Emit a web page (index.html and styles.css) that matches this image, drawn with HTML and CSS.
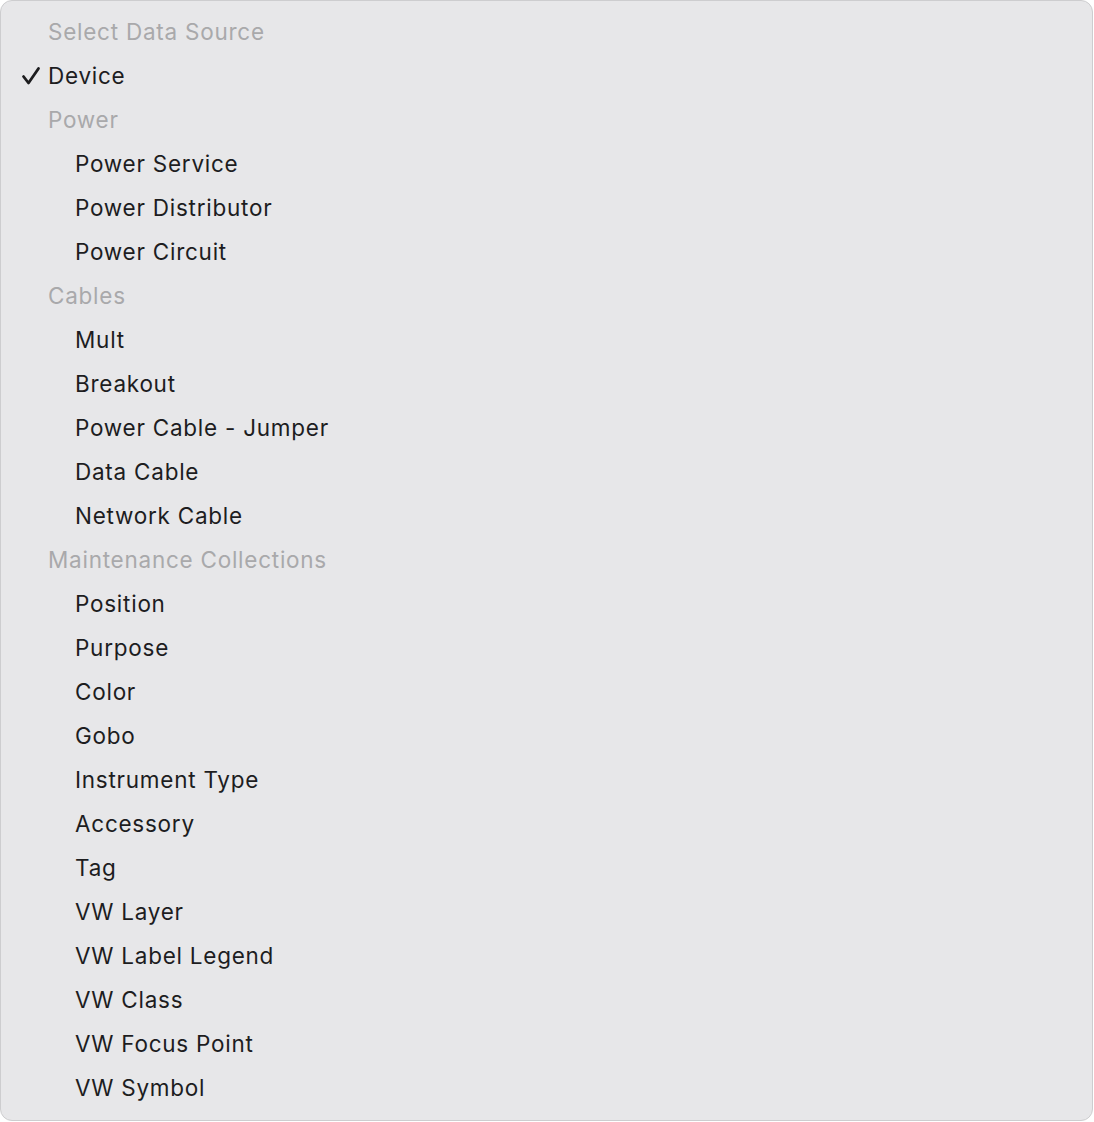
FILE: index.html
```html
<!DOCTYPE html>
<html>
<head>
<meta charset="utf-8">
<link rel="stylesheet" href="styles.css">
</head>
<body>
<div class="menu">
  <div class="row header">Select Data Source</div>
  <div class="row top"><svg class="check" width="20" height="20" viewBox="0 0 20 20"><path d="M2.5 10.5 L7.5 17 L17.5 2.5" fill="none" stroke="#1d1d1f" stroke-width="2.8" stroke-linecap="round" stroke-linejoin="round"/></svg>Device</div>
  <div class="row header">Power</div>
  <div class="row item">Power Service</div>
  <div class="row item">Power Distributor</div>
  <div class="row item">Power Circuit</div>
  <div class="row header">Cables</div>
  <div class="row item">Mult</div>
  <div class="row item">Breakout</div>
  <div class="row item">Power Cable - Jumper</div>
  <div class="row item">Data Cable</div>
  <div class="row item">Network Cable</div>
  <div class="row header">Maintenance Collections</div>
  <div class="row item">Position</div>
  <div class="row item">Purpose</div>
  <div class="row item">Color</div>
  <div class="row item">Gobo</div>
  <div class="row item">Instrument Type</div>
  <div class="row item">Accessory</div>
  <div class="row item">Tag</div>
  <div class="row item">VW Layer</div>
  <div class="row item">VW Label Legend</div>
  <div class="row item">VW Class</div>
  <div class="row item">VW Focus Point</div>
  <div class="row item">VW Symbol</div>
</div>
</body>
</html>
```
FILE: styles.css
```css
html, body {
  margin: 0;
  padding: 0;
  background: #ffffff;
}
body {
  width: 1094px;
  height: 1122px;
  overflow: hidden;
}
.menu {
  box-sizing: border-box;
  width: 1093px;
  height: 1121px;
  background: #e7e7e9;
  border: 1px solid #cdcdcf;
  border-radius: 12px;
  padding: 8px 0 0 0;
  font-family: Inter, "Noto Sans", sans-serif;
  font-size: 22.5px;
  letter-spacing: 0.75px;
}
.row {
  height: 44px;
  display: flex;
  align-items: center;
  white-space: nowrap;
}
.header {
  padding-left: 47px;
  color: #a9a9ab;
}
.top {
  padding-left: 47px;
  color: #1d1d1f;
  position: relative;
}
.check {
  position: absolute;
  left: 20px;
  top: 13px;
}
.item {
  padding-left: 74px;
  color: #1d1d1f;
}
```
